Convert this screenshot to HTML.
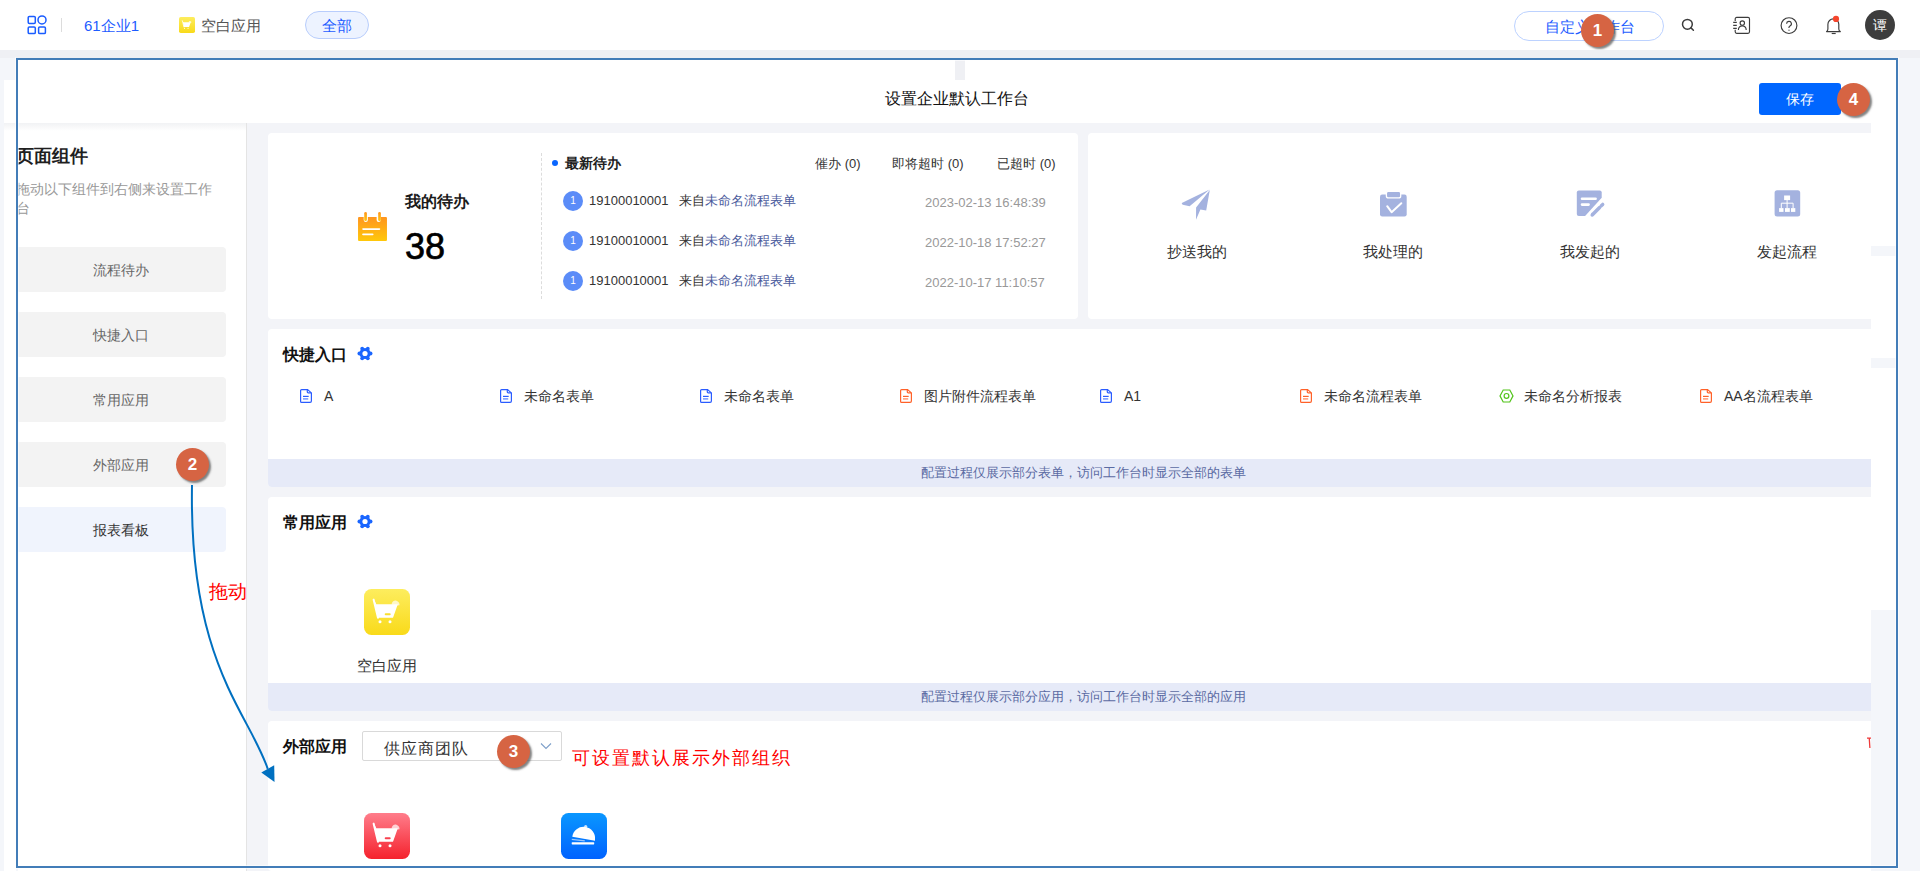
<!DOCTYPE html>
<html><head><meta charset="utf-8">
<style>
*{margin:0;padding:0;box-sizing:border-box}
html,body{width:1920px;height:871px;overflow:hidden;background:#eff0f4;font-family:"Liberation Sans",sans-serif;color:#333}
.a{position:absolute}
.t{position:absolute;white-space:nowrap;line-height:1}
.ctr{transform:translateX(-50%)}
.badge{position:absolute;width:33px;height:33px;border-radius:50%;background:#d66443;color:#fff;font-weight:bold;font-size:17px;line-height:33px;text-align:center;box-shadow:2px 2px 2px rgba(90,90,90,.75)}
.item{left:-2px;width:210px;height:45px;border-radius:4px;background:#f3f3f3;color:#666;font-size:14px;line-height:47px;text-align:center}
.item.on{background:#f0f4fd;color:#333}
.card{background:#fff;border-radius:4px 0 0 4px}
.band{background:#e6eaf8;border-radius:0 0 0 4px;color:#5b6ba3;font-size:13px;line-height:28px;text-align:center;padding-left:27px}
.num{width:20px;height:20px;border-radius:50%;background:#5b8cf8;color:#fff;font-size:10px;line-height:20px;text-align:center}
.p{font-size:13px}
.lbl{font-size:15px;color:#333;transform:translateX(-50%)}
</style></head>
<body>
<!-- top bar -->
<div class="a" style="left:0;top:0;width:1920px;height:50px;background:#fff"></div>
<svg class="a" style="left:27px;top:15px" width="20" height="20" viewBox="0 0 20 20" fill="none" stroke="#1a5cff" stroke-width="1.5"><rect x="1.2" y="1.4" width="7.1" height="7" rx="1.2"/><circle cx="15" cy="4.9" r="4"/><rect x="1.2" y="11.9" width="7.1" height="6.7" rx="1.2"/><rect x="11.6" y="11.9" width="6.8" height="6.7" rx="1.2"/></svg>
<div class="a" style="left:61px;top:18px;width:1px;height:14px;background:#dcdcdc"></div>
<div class="t" style="left:84px;top:18px;font-size:15px;color:#1d5cff">61企业1</div>
<svg class="a" style="left:179px;top:17px" width="16" height="16" viewBox="0 0 46 46"><rect width="46" height="46" rx="5" fill="url(#yg)"/><use href="#cart"/></svg>
<div class="t" style="left:201px;top:18px;font-size:15px;color:#555">空白应用</div>
<div class="a" style="left:305px;top:11px;width:64px;height:28px;border-radius:14px;background:#edf3ff;border:1px solid #b8cdfc"></div>
<div class="t" style="left:322px;top:18px;font-size:15px;color:#1d5cff">全部</div>

<div class="a" style="left:1514px;top:11px;width:150px;height:30px;border-radius:15px;background:#fff;border:1px solid #bcd2ff"></div>
<div class="t" style="left:1545px;top:19px;font-size:15px;color:#1d5cff">自定义工作台</div>
<svg class="a" style="left:1681px;top:18px" width="14" height="14" viewBox="0 0 14 14" fill="none" stroke="#3c3c3c" stroke-width="1.5"><circle cx="6.4" cy="6.3" r="4.9"/><path d="M10 9.9l2.4 2.4" stroke-linecap="round"/></svg>
<svg class="a" style="left:1732px;top:16px" width="19" height="19" viewBox="0 0 19 19" fill="none" stroke="#3c3c3c" stroke-width="1.15"><path d="M3.2 5V2.9A1.5 1.5 0 0 1 4.7 1.4H16A1.5 1.5 0 0 1 17.5 2.9V15.8A1.5 1.5 0 0 1 16 17.3H4.7A1.5 1.5 0 0 1 3.2 15.8V13.8"/><path d="M1.2 6.4H4.8M1.2 9.4H4.8M1.2 12.3H4.8"/><circle cx="10.3" cy="7" r="2.2"/><path d="M6.4 13.9A3.9 4.1 0 0 1 14.2 13.9"/></svg>
<svg class="a" style="left:1779px;top:15.5px" width="20" height="20" viewBox="0 0 20 20" fill="none" stroke="#3c3c3c" stroke-width="1.15"><circle cx="10" cy="9.6" r="7.9"/><path d="M7.6 7.7a2.4 2.4 0 1 1 3.3 2.3c-.8.4-1 .9-1 1.9"/><rect x="9.4" y="13.7" width="1.2" height="1" fill="#3c3c3c" stroke="none"/></svg>
<svg class="a" style="left:1825px;top:15px" width="18" height="21" viewBox="0 0 18 21" fill="none" stroke="#3c3c3c" stroke-width="1.15" stroke-linejoin="round"><path d="M1.5 16.6Q2.9 15.6 2.9 14V9.35A5.45 5.45 0 0 1 13.8 9.35V14Q13.8 15.6 15.3 16.6Z"/><path d="M6.7 18.5H10.7"/><circle cx="11" cy="3.9" r="3.1" fill="#f5462d" stroke="none"/></svg>
<div class="a" style="left:1865px;top:10px;width:30px;height:30px;border-radius:50%;background:#3d3d3d;color:#fff;font-size:14px;line-height:30px;text-align:center">谭</div>
<div class="badge" style="left:1581px;top:14px">1</div>

<!-- base layers -->
<div class="a" style="left:0;top:50px;width:1920px;height:821px;background:#f4f6fa"></div>
<div class="a" style="left:0;top:50px;width:1920px;height:8px;background:#eff0f4"></div>
<div class="a" style="left:4px;top:80px;width:12px;height:791px;background:#fff"></div>
<div class="a" style="left:4px;top:123px;width:12px;height:8px;background:linear-gradient(#f1f2f4,#fff)"></div>
<div class="a" style="left:18px;top:60px;width:1878px;height:63px;background:#fff"></div>
<div class="a" style="left:1871px;top:123px;width:25px;height:487px;background:#fff"></div>
<div class="a" style="left:1871px;top:246px;width:25px;height:10px;background:#f4f6fa"></div>
<div class="a" style="left:1871px;top:358px;width:25px;height:10px;background:#f4f6fa"></div>
<div class="a" style="left:955px;top:60px;width:10px;height:20px;background:#eff0f4"></div>
<div class="t" style="left:885px;top:91px;font-size:16px;color:#111">设置企业默认工作台</div>
<div class="a" style="left:1759px;top:83px;width:82px;height:32px;border-radius:3px;background:#0066ff"></div>
<div class="t" style="left:1786px;top:92px;font-size:14px;color:#fff">保存</div>

<!-- content bg -->
<div class="a" style="left:247px;top:123px;width:1624px;height:748px;background:#f3f4f8"></div>

<!-- left panel -->
<div class="a" style="left:18px;top:123px;width:229px;height:748px;overflow:hidden;background:#fff;border-right:1px solid #e4e4e4">
  <div class="a" style="left:0;top:0;width:228px;height:8px;background:linear-gradient(#f1f2f4,#fff)"></div>
  <div class="t" style="left:-2px;top:24px;font-size:18px;font-weight:bold;color:#1f1f1f">页面组件</div>
  <div class="t" style="left:-2px;top:59px;font-size:14px;color:#999">拖动以下组件到右侧来设置工作</div>
  <div class="t" style="left:-2px;top:78px;font-size:14px;color:#999">台</div>
  <div class="a item" style="top:124px">流程待办</div>
  <div class="a item" style="top:189px">快捷入口</div>
  <div class="a item" style="top:254px">常用应用</div>
  <div class="a item" style="top:319px">外部应用</div>
  <div class="a item on" style="top:384px">报表看板</div>
</div>

<!-- cards -->
<div class="a card" style="left:268px;top:133px;width:810px;height:186px;border-radius:4px"></div>
<div class="a card" style="left:1088px;top:133px;width:783px;height:186px"></div>
<div class="a card" style="left:268px;top:329px;width:1603px;height:158px"></div>
<div class="a band" style="left:268px;top:459px;width:1603px;height:28px">配置过程仅展示部分表单，访问工作台时显示全部的表单</div>
<div class="a card" style="left:268px;top:497px;width:1603px;height:214px"></div>
<div class="a band" style="left:268px;top:683px;width:1603px;height:28px">配置过程仅展示部分应用，访问工作台时显示全部的应用</div>
<div class="a card" style="left:268px;top:721px;width:1603px;height:150px"></div>

<!-- todo card -->
<svg class="a" style="left:357px;top:211px" width="31" height="30" viewBox="0 0 30 30" preserveAspectRatio="none">
 <defs><linearGradient id="cg" x1="0" y1="0" x2="0" y2="1"><stop offset="0" stop-color="#ff951f"/><stop offset="1" stop-color="#ffc80a"/></linearGradient></defs>
 <path d="M2 6h4.5v3a2 2 0 0 0 4 0V6h8.5v3a2 2 0 0 0 4 0V6H28a1 1 0 0 1 1 1v22a1 1 0 0 1-1 1H2a1 1 0 0 1-1-1V7a1 1 0 0 1 1-1z" fill="url(#cg)"/>
 <rect x="7" y="1" width="2.6" height="9" rx="1.3" fill="url(#cg)"/><rect x="20.5" y="1" width="2.6" height="9" rx="1.3" fill="url(#cg)"/>
 <rect x="5" y="17.3" width="17.5" height="1.6" rx=".8" fill="#fff"/><rect x="5" y="22.6" width="11" height="1.6" rx=".8" fill="#fff"/>
</svg>
<div class="t" style="left:405px;top:194px;font-size:16px;font-weight:bold;color:#1a1a1a">我的待办</div>
<div class="t" style="left:405px;top:229px;font-size:36px;color:#000;-webkit-text-stroke:.7px #000">38</div>
<div class="a" style="left:541px;top:153px;width:0;height:146px;border-left:1px dashed #dcdcdc"></div>
<div class="a" style="left:552px;top:160px;width:6px;height:6px;border-radius:50%;background:#0a66ff"></div>
<div class="t" style="left:565px;top:156px;font-size:14px;font-weight:bold;color:#1f1f1f">最新待办</div>
<div class="t" style="left:815px;top:157px;font-size:13px;color:#333">催办 <span class="p">(0)</span></div>
<div class="t" style="left:892px;top:157px;font-size:13px;color:#333">即将超时 <span class="p">(0)</span></div>
<div class="t" style="left:997px;top:157px;font-size:13px;color:#333">已超时 <span class="p">(0)</span></div>
<div class="a num" style="left:563px;top:191px">1</div>
<div class="t" style="left:589px;top:194px;font-size:13px;color:#333">19100010001</div>
<div class="t" style="left:679px;top:194px;font-size:13px;color:#333">来自<span style="color:#4a5a9c">未命名流程表单</span></div>
<div class="t" style="left:925px;top:196px;font-size:13px;color:#999">2023-02-13 16:48:39</div>
<div class="a num" style="left:563px;top:231px">1</div>
<div class="t" style="left:589px;top:234px;font-size:13px;color:#333">19100010001</div>
<div class="t" style="left:679px;top:234px;font-size:13px;color:#333">来自<span style="color:#4a5a9c">未命名流程表单</span></div>
<div class="t" style="left:925px;top:236px;font-size:13px;color:#999">2022-10-18 17:52:27</div>
<div class="a num" style="left:563px;top:271px">1</div>
<div class="t" style="left:589px;top:274px;font-size:13px;color:#333">19100010001</div>
<div class="t" style="left:679px;top:274px;font-size:13px;color:#333">来自<span style="color:#4a5a9c">未命名流程表单</span></div>
<div class="t" style="left:925px;top:276px;font-size:13px;color:#999">2022-10-17 11:10:57</div>

<!-- card2 icons -->
<svg class="a" style="left:1170px;top:180px" width="50" height="50" viewBox="0 0 50 50" fill="#a4b2df">
 <path d="M39.6 9.5L11.8 23.1Q11.6 24.3 12.8 24.7L19.6 26.3Z"/>
 <path d="M39.8 9.9L36.2 30.4L30.4 29.5L26 39.7L26.1 27.6Z"/>
</svg>
<svg class="a" style="left:1370px;top:180px" width="50" height="50" viewBox="0 0 50 50">
 <rect x="10" y="14.6" width="26.7" height="21.9" rx="2.2" fill="#a4b2df"/>
 <rect x="16.4" y="11.3" width="14.3" height="6.6" rx="2" fill="#a4b2df" stroke="#fff" stroke-width="1.3"/>
 <path d="M17.2 26.2L21.6 32.2L31.3 23.3" fill="none" stroke="#fff" stroke-width="2" stroke-linecap="round" stroke-linejoin="round"/>
</svg>
<svg class="a" style="left:1565px;top:180px" width="50" height="50" viewBox="0 0 50 50">
 <path d="M13.8 10.6H34.7A2 2 0 0 1 36.7 12.6V17.8L20.1 35.9H13.8A2 2 0 0 1 11.8 33.9V12.6A2 2 0 0 1 13.8 10.6Z" fill="#a4b2df"/>
 <path d="M17 18.8H30.6M17 24.6H23.6" stroke="#fff" stroke-width="2.6" stroke-linecap="round"/>
 <path d="M27.4 34.8L34.6 27.6" stroke="#a4b2df" stroke-width="3.6" stroke-linecap="round"/>
 <path d="M26.2 36.2L27.4 33" stroke="#a4b2df" stroke-width="1.5"/>
 <path d="M36.3 25.7L37.7 24.4" stroke="#a4b2df" stroke-width="3.4" stroke-linecap="round"/>
</svg>
<svg class="a" style="left:1762px;top:180px" width="50" height="50" viewBox="0 0 50 50">
 <rect x="12.6" y="10.3" width="25.6" height="26.2" rx="2.5" fill="#a4b2df"/>
 <g fill="#fff"><rect x="22.1" y="15.5" width="6" height="4.6"/><rect x="17.1" y="28.1" width="4.4" height="3.8"/><rect x="23" y="28.1" width="4.8" height="3.8"/><rect x="29" y="28.1" width="4.3" height="3.8"/></g>
 <path d="M25.1 20V28.1M19.3 28.1V23.2H31.1V28.1" fill="none" stroke="#fff" stroke-width="1"/>
</svg>
<div class="t lbl" style="left:1197px;top:244px">抄送我的</div>
<div class="t lbl" style="left:1393px;top:244px">我处理的</div>
<div class="t lbl" style="left:1590px;top:244px">我发起的</div>
<div class="t lbl" style="left:1787px;top:244px">发起流程</div>

<!-- quick entry -->
<div class="t" style="left:283px;top:347px;font-size:16px;font-weight:bold;color:#111">快捷入口</div>
<svg class="a gear" style="left:357px;top:345.6px" width="16" height="15" viewBox="0 0 16 15"><g fill="#1a66ff"><circle cx="8" cy="7.5" r="5.5"/><circle cx="13.60" cy="7.50" r="1.9"/><circle cx="10.80" cy="12.35" r="1.9"/><circle cx="5.20" cy="12.35" r="1.9"/><circle cx="2.40" cy="7.50" r="1.9"/><circle cx="5.20" cy="2.65" r="1.9"/><circle cx="10.80" cy="2.65" r="1.9"/></g><circle cx="8" cy="7.5" r="2.6" fill="#fff"/></svg>
<svg class="a" style="left:300px;top:389px" width="12" height="14" viewBox="0 0 12 14" fill="none" stroke="#2a5cff" stroke-width="1.2"><path d="M1.6 .6h6l3.8 3.3v8.2a1.3 1.3 0 0 1-1.3 1.3H1.6A1 1 0 0 1 .6 12.4V1.6a1 1 0 0 1 1-1z"/><path d="M7.3 .8v2.2a.9.9 0 0 0 .9.9h3" /><path d="M3 7.4h5.7"/><path d="M3 9.9h5.2" stroke-width="1.5" opacity=".65"/></svg>
<div class="t" style="left:324px;top:389px;font-size:14px;color:#333">A</div>
<svg class="a" style="left:500px;top:389px" width="12" height="14" viewBox="0 0 12 14" fill="none" stroke="#2a5cff" stroke-width="1.2"><path d="M1.6 .6h6l3.8 3.3v8.2a1.3 1.3 0 0 1-1.3 1.3H1.6A1 1 0 0 1 .6 12.4V1.6a1 1 0 0 1 1-1z"/><path d="M7.3 .8v2.2a.9.9 0 0 0 .9.9h3" /><path d="M3 7.4h5.7"/><path d="M3 9.9h5.2" stroke-width="1.5" opacity=".65"/></svg>
<div class="t" style="left:524px;top:389px;font-size:14px;color:#333">未命名表单</div>
<svg class="a" style="left:700px;top:389px" width="12" height="14" viewBox="0 0 12 14" fill="none" stroke="#2a5cff" stroke-width="1.2"><path d="M1.6 .6h6l3.8 3.3v8.2a1.3 1.3 0 0 1-1.3 1.3H1.6A1 1 0 0 1 .6 12.4V1.6a1 1 0 0 1 1-1z"/><path d="M7.3 .8v2.2a.9.9 0 0 0 .9.9h3" /><path d="M3 7.4h5.7"/><path d="M3 9.9h5.2" stroke-width="1.5" opacity=".65"/></svg>
<div class="t" style="left:724px;top:389px;font-size:14px;color:#333">未命名表单</div>
<svg class="a" style="left:900px;top:389px" width="12" height="14" viewBox="0 0 12 14" fill="none" stroke="#ff6128" stroke-width="1.2"><path d="M1.6 .6h6l3.8 3.3v8.2a1.3 1.3 0 0 1-1.3 1.3H1.6A1 1 0 0 1 .6 12.4V1.6a1 1 0 0 1 1-1z"/><path d="M7.3 .8v2.2a.9.9 0 0 0 .9.9h3" /><path d="M3 7.4h5.7"/><path d="M3 9.9h5.2" stroke-width="1.5" opacity=".65"/></svg>
<div class="t" style="left:924px;top:389px;font-size:14px;color:#333">图片附件流程表单</div>
<svg class="a" style="left:1100px;top:389px" width="12" height="14" viewBox="0 0 12 14" fill="none" stroke="#2a5cff" stroke-width="1.2"><path d="M1.6 .6h6l3.8 3.3v8.2a1.3 1.3 0 0 1-1.3 1.3H1.6A1 1 0 0 1 .6 12.4V1.6a1 1 0 0 1 1-1z"/><path d="M7.3 .8v2.2a.9.9 0 0 0 .9.9h3" /><path d="M3 7.4h5.7"/><path d="M3 9.9h5.2" stroke-width="1.5" opacity=".65"/></svg>
<div class="t" style="left:1124px;top:389px;font-size:14px;color:#333">A1</div>
<svg class="a" style="left:1300px;top:389px" width="12" height="14" viewBox="0 0 12 14" fill="none" stroke="#ff6128" stroke-width="1.2"><path d="M1.6 .6h6l3.8 3.3v8.2a1.3 1.3 0 0 1-1.3 1.3H1.6A1 1 0 0 1 .6 12.4V1.6a1 1 0 0 1 1-1z"/><path d="M7.3 .8v2.2a.9.9 0 0 0 .9.9h3" /><path d="M3 7.4h5.7"/><path d="M3 9.9h5.2" stroke-width="1.5" opacity=".65"/></svg>
<div class="t" style="left:1324px;top:389px;font-size:14px;color:#333">未命名流程表单</div>
<svg class="a" style="left:1499px;top:389px" width="15" height="14" viewBox="0 0 15 14" fill="none" stroke="#52c41a" stroke-width="1.2"><path d="M4.2 1h6.6l3.2 5.9-3.2 6.1H4.2L1 6.9z"/><circle cx="7.5" cy="6.9" r="2.4"/></svg>
<div class="t" style="left:1524px;top:389px;font-size:14px;color:#333">未命名分析报表</div>
<svg class="a" style="left:1700px;top:389px" width="12" height="14" viewBox="0 0 12 14" fill="none" stroke="#ff6128" stroke-width="1.2"><path d="M1.6 .6h6l3.8 3.3v8.2a1.3 1.3 0 0 1-1.3 1.3H1.6A1 1 0 0 1 .6 12.4V1.6a1 1 0 0 1 1-1z"/><path d="M7.3 .8v2.2a.9.9 0 0 0 .9.9h3" /><path d="M3 7.4h5.7"/><path d="M3 9.9h5.2" stroke-width="1.5" opacity=".65"/></svg>
<div class="t" style="left:1724px;top:389px;font-size:14px;color:#333">AA名流程表单</div>

<!-- common apps -->
<div class="t" style="left:283px;top:515px;font-size:16px;font-weight:bold;color:#111">常用应用</div>
<svg class="a gear" style="left:357px;top:513.6px" width="16" height="15" viewBox="0 0 16 15"><g fill="#1a66ff"><circle cx="8" cy="7.5" r="5.5"/><circle cx="13.60" cy="7.50" r="1.9"/><circle cx="10.80" cy="12.35" r="1.9"/><circle cx="5.20" cy="12.35" r="1.9"/><circle cx="2.40" cy="7.50" r="1.9"/><circle cx="5.20" cy="2.65" r="1.9"/><circle cx="10.80" cy="2.65" r="1.9"/></g><circle cx="8" cy="7.5" r="2.6" fill="#fff"/></svg>
<svg class="a" style="left:364px;top:589px" width="46" height="46" viewBox="0 0 46 46">
 <defs><linearGradient id="yg" x1="0" y1="0" x2="0" y2="1"><stop offset="0" stop-color="#fded5e"/><stop offset="1" stop-color="#f9da1a"/></linearGradient>
 <linearGradient id="rg" x1="0" y1="0" x2="0" y2="1"><stop offset="0" stop-color="#ff7d8b"/><stop offset="1" stop-color="#f5222d"/></linearGradient>
 <linearGradient id="bg" x1="0" y1="0" x2="0" y2="1"><stop offset="0" stop-color="#0a97ff"/><stop offset="1" stop-color="#0062ff"/></linearGradient></defs>
 <rect width="46" height="46" rx="7.5" fill="url(#yg)"/>
 <g id="cart"><path d="M10.2 11L12.3 15.3H33.8L29.2 28.2Q29 28.8 28.4 28.8H14z" fill="#fff"/><path d="M9.6 10.6L14 28.7" stroke="#fff" stroke-width="2" stroke-linecap="round"/><path d="M27.5 15.5C28 12.5 30.5 11 32.5 11.8C34.5 12.5 35.8 14 35.5 16.2L33 16.5Z" fill="#fff" opacity=".7"/><circle cx="16" cy="32.7" r="1.5" fill="#fff"/><circle cx="26" cy="32.7" r="1.5" fill="#fff"/></g>
 <rect x="20.7" y="24.3" width="6" height="2" rx="1" fill="#f9de2e"/>
</svg>
<div class="t lbl" style="left:387px;top:658px">空白应用</div>

<!-- external apps -->
<div class="t" style="left:283px;top:739px;font-size:16px;font-weight:bold;color:#111">外部应用</div>
<div class="a" style="left:362px;top:731px;width:200px;height:30px;border:1px solid #d9d9d9;border-radius:2px;background:#fff"></div>
<div class="t" style="left:384px;top:741px;font-size:16px;color:#333;letter-spacing:.9px">供应商团队</div>
<svg class="a" style="left:540px;top:742px" width="12" height="8" viewBox="0 0 12 8" fill="none" stroke="#7d9fc9" stroke-width="1.1"><path d="M1 1.5l5 5 5-5"/></svg>
<svg class="a" style="left:364px;top:813px" width="46" height="46" viewBox="0 0 46 46">
 <rect width="46" height="46" rx="7.5" fill="url(#rg)"/><use href="#cart"/>
 <rect x="20.7" y="24.3" width="6" height="2" rx="1" fill="#f8414f"/>
</svg>
<svg class="a" style="left:561px;top:813px" width="46" height="46" viewBox="0 0 46 46">
 <rect width="46" height="46" rx="7.5" fill="url(#bg)"/>
 <path d="M11.3 23.7A11.4 11.2 0 0 1 34 26.5V27.7Z" fill="#fff"/><circle cx="24.7" cy="13.6" r="1.6" fill="#fff" opacity=".8"/>
 <path d="M10.8 26.3l13 1.6" stroke="#fff" stroke-width="1.2" opacity=".6"/>
 <rect x="10.7" y="29.2" width="22.5" height="2.2" rx=".6" fill="#fff"/>
</svg>
<svg class="a" style="left:1866px;top:735px" width="5" height="14" viewBox="0 0 5 14"><path d="M1 3.2H5M3.2 2.5L3.9 13" stroke="#ee3b3b" stroke-width="1.3"/></svg>

<!-- frame -->
<div class="a" style="left:15px;top:57px;width:1884px;height:812px;border:1px solid rgba(255,255,255,.6);border-top:none"></div>
<div class="a" style="left:16px;top:58px;width:1882px;height:810px;border:2px solid #437db8"></div>
<div class="a" style="left:18px;top:60px;width:1878px;height:806px;border:1px solid rgba(255,255,255,.6)"></div>
<div class="badge" style="left:1837px;top:83px">4</div>
<!-- annotations -->
<div class="t" style="left:572px;top:749px;font-size:18px;letter-spacing:2px;color:#ff0000">可设置默认展示外部组织</div>
<div class="badge" style="left:497px;top:735px">3</div>
<svg class="a" style="left:0;top:0" width="1920" height="871" viewBox="0 0 1920 871">
 <path d="M192 485C188.9 663.4 248.9 712.5 267.75 768.9" fill="none" stroke="#0070c0" stroke-width="2"/>
 <path d="M274.5 782L261.3 772.5L274.2 765.3Z" fill="#0070c0"/>
</svg>
<div class="t" style="left:209px;top:582px;font-size:19px;color:#ff0000">拖动</div>
<div class="badge" style="left:176px;top:448px">2</div>
</body></html>
